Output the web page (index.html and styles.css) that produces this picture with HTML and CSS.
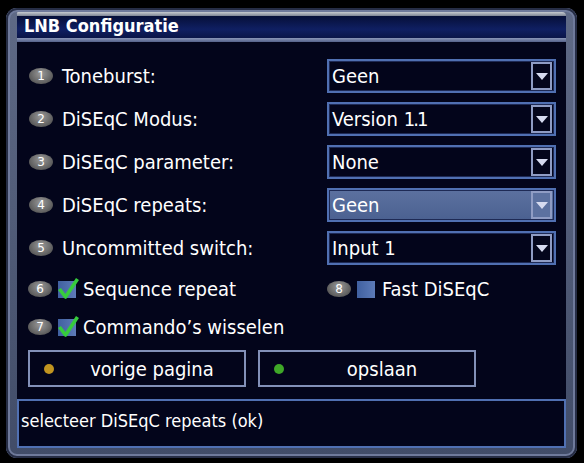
FILE: index.html
```html
<!DOCTYPE html>
<html lang="nl">
<head>
    <meta charset="UTF-8">
    <title>LNB Configuratie</title>
    <link rel="stylesheet" href="styles.css">
</head>
<body>
    <div class="window">
        <div class="titlebar">
            <div class="title-shine"></div>
            <div class="title-band">LNB Configuratie</div>
            <div class="title-line"></div>
        </div>

        <div class="body">
            <div class="content">
                <div class="row">
                    <div class="label"><span class="badge">1</span>Toneburst:</div>
                    <div class="select"><span>Geen</span><span class="arrow"></span></div>
                </div>
                <div class="row">
                    <div class="label"><span class="badge">2</span>DiSEqC Modus:</div>
                    <div class="select"><span>Version <span class="narrow">1.1</span></span><span class="arrow"></span></div>
                </div>
                <div class="row">
                    <div class="label"><span class="badge">3</span>DiSEqC parameter:</div>
                    <div class="select"><span>None</span><span class="arrow"></span></div>
                </div>
                <div class="row">
                    <div class="label"><span class="badge">4</span>DiSEqC repeats:</div>
                    <div class="select active"><span>Geen</span><span class="arrow"></span></div>
                </div>
                <div class="row">
                    <div class="label"><span class="badge">5</span>Uncommitted switch:</div>
                    <div class="select"><span>Input <span class="narrow">1</span></span><span class="arrow"></span></div>
                </div>

                <div class="checks">
                    <div class="check"><span class="badge">6</span><span class="box checked"></span>Sequence repeat</div>
                    <div class="check"><span class="badge">8</span><span class="box"></span>Fast DiSEqC</div>
                    <div class="check"><span class="badge">7</span><span class="box checked"></span>Commando’s wisselen</div>
                </div>

                <div class="buttons">
                    <div class="button"><span class="dot yellow"></span>vorige pagina</div>
                    <div class="button"><span class="dot green"></span>opslaan</div>
                </div>
            </div>

            <div class="status">selecteer DiSEqC repeats (ok)</div>
        </div>
    </div>
</body>
</html>
```

FILE: styles.css
```css
body {
    margin: 0;
    background-color: #000;
    font-family: 'DejaVu Sans Condensed', 'DejaVu Sans', sans-serif;
    color: #fff;
}
.window {
    margin: 8px 0 0 6px;
    width: 571px;
    height: 450px;
    box-sizing: border-box;
    padding: 4px 11px 10px 11px;
    border-radius: 11px;
    background: linear-gradient(to bottom, #5f6a86, #414c68);
    box-shadow: inset 0 0 0 2px #262d45, inset 0 0 0 4px #6f7a9b;
}
.titlebar {
    display: flex;
    flex-direction: column;
}
.title-shine {
    height: 4px;
    background: linear-gradient(to bottom, #c6cad0, #7d8494);
    border-radius: 2px 6px 0 0;
}
.title-band {
    height: 22px;
    line-height: 20px;
    padding-left: 7px;
    background: linear-gradient(to bottom, #060f38, #0f1f62 60%, #0a1548);
    font-weight: bold;
    font-size: 18px;
}
.title-line {
    height: 4px;
    background: linear-gradient(to bottom, #8a96b8, #55628a);
}
.body {
    height: 406px;
    background-color: #03051b;
    display: flex;
    flex-direction: column;
}
.content {
    padding: 17px 10px 0 12px;
}
.row {
    display: flex;
    align-items: center;
    height: 34px;
    margin-bottom: 9px;
}
.label {
    width: 298px;
    display: flex;
    align-items: center;
    font-size: 20px;
}
.badge {
    display: inline-block;
    width: 24px;
    height: 16px;
    border-radius: 50%;
    background: radial-gradient(ellipse at 50% 35%, #9a9a9a, #616161 65%, #3c3c3c);
    font-family: 'DejaVu Sans', sans-serif;
    font-size: 12px;
    line-height: 16px;
    text-align: center;
    color: #fff;
    margin-right: 9px;
}
.narrow {
    letter-spacing: -2px;
}
.select {
    width: 229px;
    height: 34px;
    box-sizing: border-box;
    border: 2px solid #5070b2;
    box-shadow: inset 0 0 0 1px #1e2a55;
    background-color: #03051b;
    display: flex;
    align-items: center;
    justify-content: space-between;
    padding: 0 2px 0 3px;
    font-size: 20px;
}
.select.active {
    background: linear-gradient(to bottom, #5c71a0, #4b6191);
}
.arrow {
    width: 21px;
    height: 28px;
    box-sizing: border-box;
    border: 2px solid #8f9cc4;
    background-color: #04061c;
    display: flex;
    align-items: center;
    justify-content: center;
}
.select.active .arrow {
    background-color: #5c71a0;
}
.arrow::after {
    content: '';
    border-left: 6px solid transparent;
    border-right: 6px solid transparent;
    border-top: 7px solid #d6dbf0;
}
.checks {
    display: grid;
    grid-template-columns: 299px auto;
    row-gap: 14px;
    margin-top: 12px;
}
.check {
    display: flex;
    align-items: center;
    height: 24px;
    font-size: 20px;
}
.check .badge {
    margin-right: 6px;
    margin-left: -1px;
}
.box {
    position: relative;
    width: 18px;
    height: 17px;
    margin-right: 7px;
    background: linear-gradient(to right, #4060a0, #5d7bb8);
}
.box.checked::after {
    content: '';
    position: absolute;
    left: 0;
    top: -4px;
    width: 21px;
    height: 22px;
    background: url("data:image/svg+xml,%3Csvg xmlns='http://www.w3.org/2000/svg' viewBox='0 0 21 22'%3E%3Cpath d='M1.5 12 L7.5 20 L19.5 2' fill='none' stroke='%2336cc3c' stroke-width='3.6' stroke-linejoin='round'/%3E%3C/svg%3E") no-repeat;
}
.buttons {
    display: flex;
    gap: 12px;
    margin: 11px 0 0 -1px;
}
.button {
    position: relative;
    width: 218px;
    height: 37px;
    box-sizing: border-box;
    border: 2px solid #8290b8;
    background-color: #03051b;
    display: flex;
    align-items: center;
    justify-content: center;
    padding-left: 30px;
    font-size: 20px;
}
.dot {
    position: absolute;
    left: 14px;
    top: 12px;
    width: 10px;
    height: 10px;
    border-radius: 50%;
}
.dot.yellow {
    background-color: #c19520;
}
.dot.green {
    background-color: #3fa828;
}
.status {
    margin-top: 12px;
    height: 49px;
    box-sizing: border-box;
    border: 2px solid #5070b2;
    padding: 9px 0 0 2px;
    font-size: 18px;
}
```
